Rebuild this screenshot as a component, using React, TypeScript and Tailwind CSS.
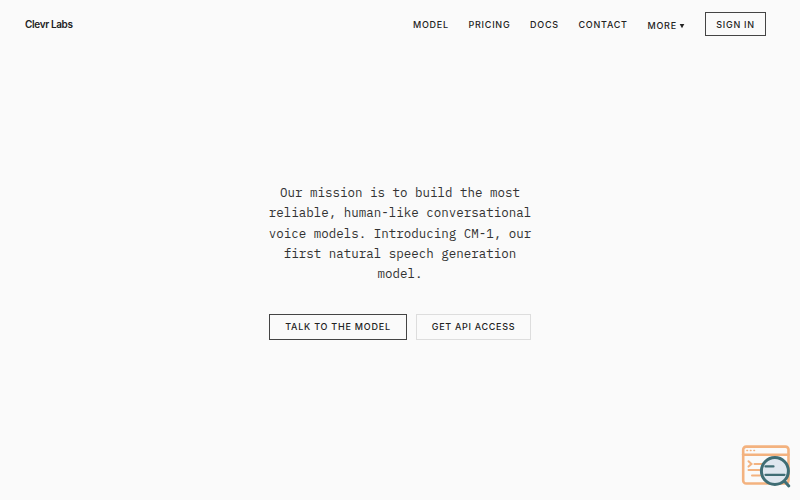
import React from "react";

const navLinks = [
    { title: "Model", href: "#model", className: "w-[55.5px]" },
    { title: "Pricing", href: "#pricing", className: "w-[61.5px]" },
    { title: "Docs", href: "#docs", className: "w-[48.5px]" },
    { title: "Contact", href: "#contact", className: "w-[69px]" },
];

const missionLines = [
    "Our mission is to build the most",
    "reliable, human-like conversational",
    "voice models. Introducing CM-1, our",
    "first natural speech generation",
    "model.",
];

const NavBar = () => {
    return (
        <header className="flex h-12 items-center justify-between pl-[25px] pr-[34px]">
            <a href="#" className="pt-px text-[10px] font-semibold tracking-[-0.36px] whitespace-nowrap">
                Clevr Labs
            </a>

            <nav className="flex items-center text-[9px] font-medium tracking-[0.75px] uppercase whitespace-nowrap">
                {navLinks.map((item) => (
                    <a key={item.href} href={item.href} className={`pt-[2px] ${item.className}`}>
                        {item.title}
                    </a>
                ))}

                <button className="flex w-[57.5px] items-center gap-[2px] pt-[3px] uppercase tracking-[0.75px]">
                    More
                    <svg width="6" height="6" viewBox="0 0 6 6" fill="currentColor">
                        <path d="M0.7 1h4.6L3 5.3z" />
                    </svg>
                </button>

                <a
                    href="#sign-in"
                    className="flex h-6 w-[61px] items-center justify-center border border-[#444] pt-px"
                >
                    Sign in
                </a>
            </nav>
        </header>
    );
};

const SearchBadge = () => {
    return (
        <svg
            className="absolute left-[741px] top-[444px]"
            width="52"
            height="46"
            viewBox="0 0 52 46"
            fill="none"
            strokeLinecap="round"
        >
            <g stroke="#f3b27f" strokeWidth="2">
                <rect x="2.2" y="2.6" width="45.3" height="36.9" rx="3" strokeWidth="2.6" />
                <path d="M2 10.7h45.5" strokeWidth="2.4" />
                <path d="M5.9 6.6h.6M9.4 6.6h.6M12.9 6.6h.6" strokeWidth="1.5" />
                <path d="M7.5 17.2l3 2.7-3 2.7" />
                <path d="M13.5 19.9h8M7.5 26h12M11 31.5h8" />
            </g>
            <circle cx="33.9" cy="27" r="13.5" fill="#dfe7ef" stroke="#3f6d74" strokeWidth="3" />
            <path d="M24.5 22.4h8M24.5 30.8h19" stroke="#3f6d74" strokeWidth="2.2" />
            <path d="M43.8 37.6l4 4.4" stroke="#3f6d74" strokeWidth="3" />
        </svg>
    );
};

const App = () => {
    return (
        <div className="relative h-[500px] w-[800px] overflow-hidden bg-[#fafafa] font-['Inter',sans-serif] text-[#222]">
            <NavBar />

            <main className="flex flex-col items-center pt-[134px]">
                <p className="text-center font-['IBM_Plex_Mono','Liberation_Mono',monospace] text-[12.5px] leading-[20.25px] text-[#333]">
                    {missionLines.map((line) => (
                        <span key={line} className="block whitespace-nowrap">
                            {line}
                        </span>
                    ))}
                </p>

                <div className="mt-[30.75px] flex gap-[9px] text-[9px] font-medium">
                    <button className="h-[26px] w-[138px] border border-[#444] uppercase tracking-[0.76px]">
                        Talk to the model
                    </button>
                    <button className="h-[26px] w-[115px] border border-[#ddd] uppercase tracking-[0.68px]">
                        Get API access
                    </button>
                </div>
            </main>

            <SearchBadge />
        </div>
    );
};

export default App;
